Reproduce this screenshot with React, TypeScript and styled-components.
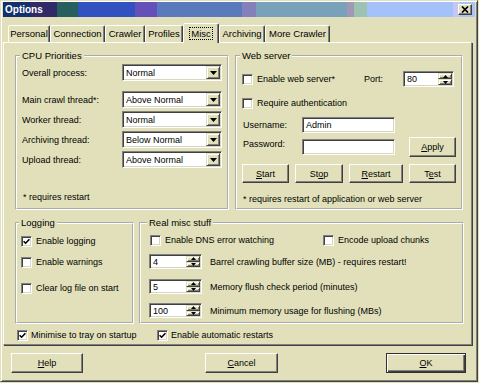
import React from "react";
import styled, { createGlobalStyle, css } from "styled-components";

const FACE = "#e2e0ba";

const GlobalStyle = createGlobalStyle`
  html, body {
    margin: 0;
    padding: 0;
    background: ${FACE};
  }
  body {
    font-family: "Liberation Sans", Arial, sans-serif;
    font-size: 9px;
    line-height: 12px;
    color: #000;
  }
  * { box-sizing: border-box; }
`;

const Window = styled.div`
  width: 478px;
  height: 382px;
  background: ${FACE};
  border: 1px solid;
  border-color: ${FACE} #404040 #404040 ${FACE};
  box-shadow: inset 1px 1px #fff, inset -1px -1px #808080;
  padding: 1px 2px 2px 2px;
  display: flex;
  flex-direction: column;
`;

const TitleBar = styled.div`
  flex: none;
  height: 15px;
  display: flex;
  align-items: center;
  justify-content: space-between;
  padding: 0 3px 0 2px;
  background: linear-gradient(
    to right,
    #12306c 0 27px,
    #322a66 27px 54px,
    #275f5f 54px 75px,
    #3251c0 75px 132px,
    #6550b9 132px 154px,
    #5a7abb 154px 239px,
    #8480ba 239px 253px,
    #79a1b9 253px 344px,
    #a199b4 344px 351px,
    #9bc2b3 351px 364px,
    #a4c2f9 364px 450px,
    #c4c6f4 450px 457px,
    #a8c4f8 457px
  );
`;

const Title = styled.span`
  color: #fff;
  font-weight: bold;
  font-size: 10px;
`;

const CloseButton = styled.span`
  width: 14px;
  height: 11px;
  background: ${FACE};
  border: 1px solid;
  border-color: #fff #404040 #404040 #fff;
  box-shadow: inset -1px -1px #808080;
  display: flex;
  align-items: center;
  justify-content: center;
`;

const TabStrip = styled.div`
  flex: none;
  height: 19px;
  margin-top: 6px;
  padding-left: 5px;
  display: flex;
  align-items: flex-end;
  position: relative;
  z-index: 1;
`;

const Tab = styled.div<{ $w: number; $active?: boolean }>`
  width: ${(p) => p.$w}px;
  height: ${(p) => (p.$active ? 20 : 17)}px;
  margin-bottom: ${(p) => (p.$active ? -1 : 0)}px;
  background: ${FACE};
  border: 1px solid;
  border-bottom: none;
  border-color: #fff #404040 transparent #fff;
  box-shadow: inset -1px 0 #808080;
  border-radius: 2px 2px 0 0;
  display: flex;
  align-items: center;
  justify-content: center;
  white-space: nowrap;
  font-size: 9.5px;
`;

const Focus = styled.span`
  outline: 1px dotted #000;
  padding: 0 1px;
  line-height: 11px;
`;

const Panel = styled.div`
  flex: none;
  height: 303px;
  margin-right: 3px;
  border: 1px solid;
  border-color: #fff #808080 #808080 #fff;
  box-shadow: 1px 1px 0 #404040;
  padding: 7px 0 0 11px;
  display: flex;
  flex-direction: column;
`;

const GroupRow = styled.div<{ $h: number; $gap: number; $mt?: number }>`
  display: flex;
  height: ${(p) => p.$h}px;
  gap: ${(p) => p.$gap}px;
  margin-top: ${(p) => p.$mt ?? 0}px;
`;

const GroupBox = styled.fieldset<{ $w: number; $pad: string }>`
  margin: 0;
  min-width: 0;
  width: ${(p) => p.$w}px;
  height: 100%;
  border: 2px groove #fff;
  padding: ${(p) => p.$pad};
  display: flex;
  flex-direction: column;
`;

const Legend = styled.legend`
  padding: 0 2px;
  margin-left: -2px;
  line-height: 12px;
  font-size: 9.5px;
`;

const PriorityRow = styled.div<{ $mt: number }>`
  display: grid;
  grid-template-columns: 100px 100px;
  align-items: center;
  height: 17px;
  margin-top: ${(p) => p.$mt}px;
`;

const Footnote = styled.div`
  margin-top: auto;
  padding-left: 1px;
  white-space: nowrap;
`;

const Combo = styled.div`
  width: 100px;
  height: 17px;
  display: flex;
  align-items: center;
  background: #fff;
  border: 1px solid;
  border-color: #808080 #fff #fff #808080;
  box-shadow: inset 1px 1px #404040, inset -1px -1px #d8d6c0;
  padding: 1px;
`;

const ComboText = styled.span`
  flex: 1;
  padding-left: 2px;
`;

const SmallButton = styled.span`
  background: ${FACE};
  border: 1px solid;
  border-color: ${FACE} #404040 #404040 ${FACE};
  box-shadow: inset 1px 1px #fff, inset -1px -1px #808080;
  display: flex;
  align-items: center;
  justify-content: center;
`;

const DropButton = styled(SmallButton)`
  width: 14px;
  height: 13px;
`;

const TextField = styled.div<{ $w: number; $h: number }>`
  width: ${(p) => p.$w}px;
  height: ${(p) => p.$h}px;
  background: #fff;
  border: 1px solid;
  border-color: #808080 #fff #fff #808080;
  box-shadow: inset 1px 1px #404040, inset -1px -1px #d8d6c0;
  padding: 0 3px;
  display: flex;
  align-items: center;
`;

const SpinBox = styled(TextField)`
  padding: 1px 1px 1px 3px;
`;

const SpinText = styled.span`
  flex: 1;
`;

const SpinButtons = styled.div`
  width: 14px;
  height: 100%;
  display: flex;
  flex-direction: column;
`;

const SpinButton = styled(SmallButton)`
  flex: 1;
`;

const CheckRow = styled.div<{ $mt?: number; $gap?: number; $ml?: number }>`
  display: flex;
  align-items: center;
  height: 14px;
  gap: ${(p) => p.$gap ?? 4}px;
  margin-top: ${(p) => p.$mt ?? 0}px;
  margin-left: ${(p) => p.$ml ?? 0}px;
  white-space: nowrap;
`;

const CheckBox = styled.span`
  flex: none;
  width: 11px;
  height: 11px;
  background: #fff;
  border: 1px solid;
  border-color: #808080 #fff #fff #808080;
  box-shadow: inset 1px 1px #404040, inset -1px -1px #d8d6c0;
  display: flex;
  align-items: center;
  justify-content: center;
`;

const WebRow = styled.div<{ $cols: string; $h: number; $mt: number }>`
  display: grid;
  grid-template-columns: ${(p) => p.$cols};
  align-items: center;
  height: ${(p) => p.$h}px;
  margin-top: ${(p) => p.$mt}px;
  white-space: nowrap;
`;

const FieldLabel = styled.span<{ $top?: boolean }>`
  padding-left: 1px;
  ${(p) =>
    p.$top &&
    css`
      align-self: start;
      margin-top: 1px;
    `}
`;

const ButtonRow = styled.div<{ $mt: number }>`
  display: flex;
  gap: 6px;
  margin-top: ${(p) => p.$mt}px;
`;

const Button = styled.button<{ $w: number; $h?: number; $ml?: number; $default?: boolean }>`
  width: ${(p) => p.$w}px;
  height: ${(p) => p.$h ?? 20}px;
  margin: 0 0 0 ${(p) => p.$ml ?? 0}px;
  padding: 0;
  font: inherit;
  color: #000;
  background: ${FACE};
  border: 1px solid;
  border-color: #fff #404040 #404040 #fff;
  box-shadow: inset -1px -1px #808080;
  ${(p) =>
    p.$default &&
    css`
      border-color: #303030;
      box-shadow: inset 1px 1px #fff, inset -1px -1px #404040, inset -2px -2px #808080;
    `}
`;

const MiscTopRow = styled.div`
  display: grid;
  grid-template-columns: 174px auto;
  align-items: center;
  margin-top: 4px;
`;

const SpinRow = styled.div<{ $mt: number }>`
  display: flex;
  align-items: center;
  gap: 8px;
  height: 15px;
  margin-top: ${(p) => p.$mt}px;
  white-space: nowrap;
`;

const BottomChecks = styled.div`
  display: grid;
  grid-template-columns: 140px auto;
  margin-top: 4px;
  padding-left: 2px;
`;

const Footer = styled.div`
  display: flex;
  margin-top: 8px;
  padding-left: 8px;
`;

function Tick() {
  return (
    <svg width="7" height="7" viewBox="0 0 7 7">
      <path d="M0.6 3.2 L2.6 5.2 L6.4 1.2" fill="none" stroke="#000" strokeWidth="1.6" />
    </svg>
  );
}

function Check({ checked, label, mt, gap, ml }: { checked?: boolean; label: string; mt?: number; gap?: number; ml?: number }) {
  return (
    <CheckRow $mt={mt} $gap={gap} $ml={ml}>
      <CheckBox>{checked && <Tick />}</CheckBox>
      <span>{label}</span>
    </CheckRow>
  );
}

function DownArrow() {
  return (
    <svg width="7" height="4" viewBox="0 0 7 4">
      <polygon points="0,0 7,0 3.5,4" fill="#000" />
    </svg>
  );
}

function Dropdown({ value }: { value: string }) {
  return (
    <Combo>
      <ComboText>{value}</ComboText>
      <DropButton>
        <DownArrow />
      </DropButton>
    </Combo>
  );
}

function Spinner({ value, w, h }: { value: string; w: number; h: number }) {
  return (
    <SpinBox $w={w} $h={h}>
      <SpinText>{value}</SpinText>
      <SpinButtons>
        <SpinButton>
          <svg width="5" height="3" viewBox="0 0 5 3">
            <polygon points="2.5,0 5,3 0,3" fill="#000" />
          </svg>
        </SpinButton>
        <SpinButton>
          <svg width="5" height="3" viewBox="0 0 5 3">
            <polygon points="0,0 5,0 2.5,3" fill="#000" />
          </svg>
        </SpinButton>
      </SpinButtons>
    </SpinBox>
  );
}

const priorities = [
  { label: "Overall process:", value: "Normal", mt: 0 },
  { label: "Main crawl thread*:", value: "Above Normal", mt: 10 },
  { label: "Worker thread:", value: "Normal", mt: 3 },
  { label: "Archiving thread:", value: "Below Normal", mt: 3 },
  { label: "Upload thread:", value: "Above Normal", mt: 3 },
];

const tabs = [
  { name: "Personal", w: 42 },
  { name: "Connection", w: 55 },
  { name: "Crawler", w: 40 },
  { name: "Profiles", w: 38 },
  { name: "Misc", w: 36, active: true },
  { name: "Archiving", w: 46 },
  { name: "More Crawler", w: 65 },
];

export default function App() {
  return (
    <>
      <GlobalStyle />
      <Window>
        <TitleBar>
          <Title>Options</Title>
          <CloseButton>
            <svg width="8" height="7" viewBox="0 0 8 7">
              <path d="M1 0.5 L7 6.5 M7 0.5 L1 6.5" stroke="#000" strokeWidth="1.7" />
            </svg>
          </CloseButton>
        </TitleBar>

        <TabStrip>
          {tabs.map((t) => (
            <Tab key={t.name} $w={t.w} $active={t.active}>
              {t.active ? <Focus>{t.name}</Focus> : t.name}
            </Tab>
          ))}
        </TabStrip>

        <Panel>
          <GroupRow $h={160} $gap={6}>
            <GroupBox $w={214} $pad="2px 5px 5px">
              <Legend>CPU Priorities</Legend>
              {priorities.map((p) => (
                <PriorityRow key={p.label} $mt={p.mt}>
                  <span>{p.label}</span>
                  <Dropdown value={p.value} />
                </PriorityRow>
              ))}
              <Footnote>* requires restart</Footnote>
            </GroupBox>

            <GroupBox $w={228} $pad="0 5px 3px">
              <Legend>Web server</Legend>
              <WebRow $cols="122px 39px 51px" $h={16} $mt={9}>
                <Check label="Enable web server*" />
                <span>Port:</span>
                <Spinner value="80" w={51} h={16} />
              </WebRow>
              <Check label="Require authentication" mt={9} />
              <WebRow $cols="60px 93px" $h={16} $mt={7}>
                <FieldLabel>Username:</FieldLabel>
                <TextField $w={93} $h={16}>Admin</TextField>
              </WebRow>
              <WebRow $cols="60px 93px auto" $h={20} $mt={4}>
                <FieldLabel $top>Password:</FieldLabel>
                <TextField $w={93} $h={16} />
                <Button $w={47} $ml={14}>
                  <u>A</u>pply
                </Button>
              </WebRow>
              <ButtonRow $mt={7}>
                <Button $w={47} $h={19}>
                  <u>S</u>tart
                </Button>
                <Button $w={48} $h={19}>
                  St<u>o</u>p
                </Button>
                <Button $w={54} $h={19}>
                  <u>R</u>estart
                </Button>
                <Button $w={47} $h={19}>
                  T<u>e</u>st
                </Button>
              </ButtonRow>
              <Footnote>* requires restart of application or web server</Footnote>
            </GroupBox>
          </GroupRow>

          <GroupRow $h={107} $gap={5} $mt={7}>
            <GroupBox $w={119} $pad="0 4px 4px">
              <Legend>Logging</Legend>
              <Check checked label="Enable logging" mt={5} />
              <Check label="Enable warnings" mt={7} />
              <Check label="Clear log file on start" mt={12} />
            </GroupBox>

            <GroupBox $w={325} $pad="0 8px 4px">
              <Legend>Real misc stuff</Legend>
              <MiscTopRow>
                <Check label="Enable DNS error watching" ml={1} />
                <Check label="Encode upload chunks" />
              </MiscTopRow>
              <SpinRow $mt={7}>
                <Spinner value="4" w={53} h={15} />
                <span>Barrel crawling buffer size (MB) - requires restart!</span>
              </SpinRow>
              <SpinRow $mt={10}>
                <Spinner value="5" w={53} h={15} />
                <span>Memory flush check period (minutes)</span>
              </SpinRow>
              <SpinRow $mt={9}>
                <Spinner value="100" w={53} h={15} />
                <span>Minimum memory usage for flushing (MBs)</span>
              </SpinRow>
            </GroupBox>
          </GroupRow>

          <BottomChecks>
            <Check checked label="Minimise to tray on startup" gap={3} />
            <Check checked label="Enable automatic restarts" gap={3} />
          </BottomChecks>
        </Panel>

        <Footer>
          <Button $w={72}>
            <u>H</u>elp
          </Button>
          <Button $w={73} $ml={122}>
            <u>C</u>ancel
          </Button>
          <Button $w={80} $ml={108} $default>
            <u>O</u>K
          </Button>
        </Footer>
      </Window>
    </>
  );
}
